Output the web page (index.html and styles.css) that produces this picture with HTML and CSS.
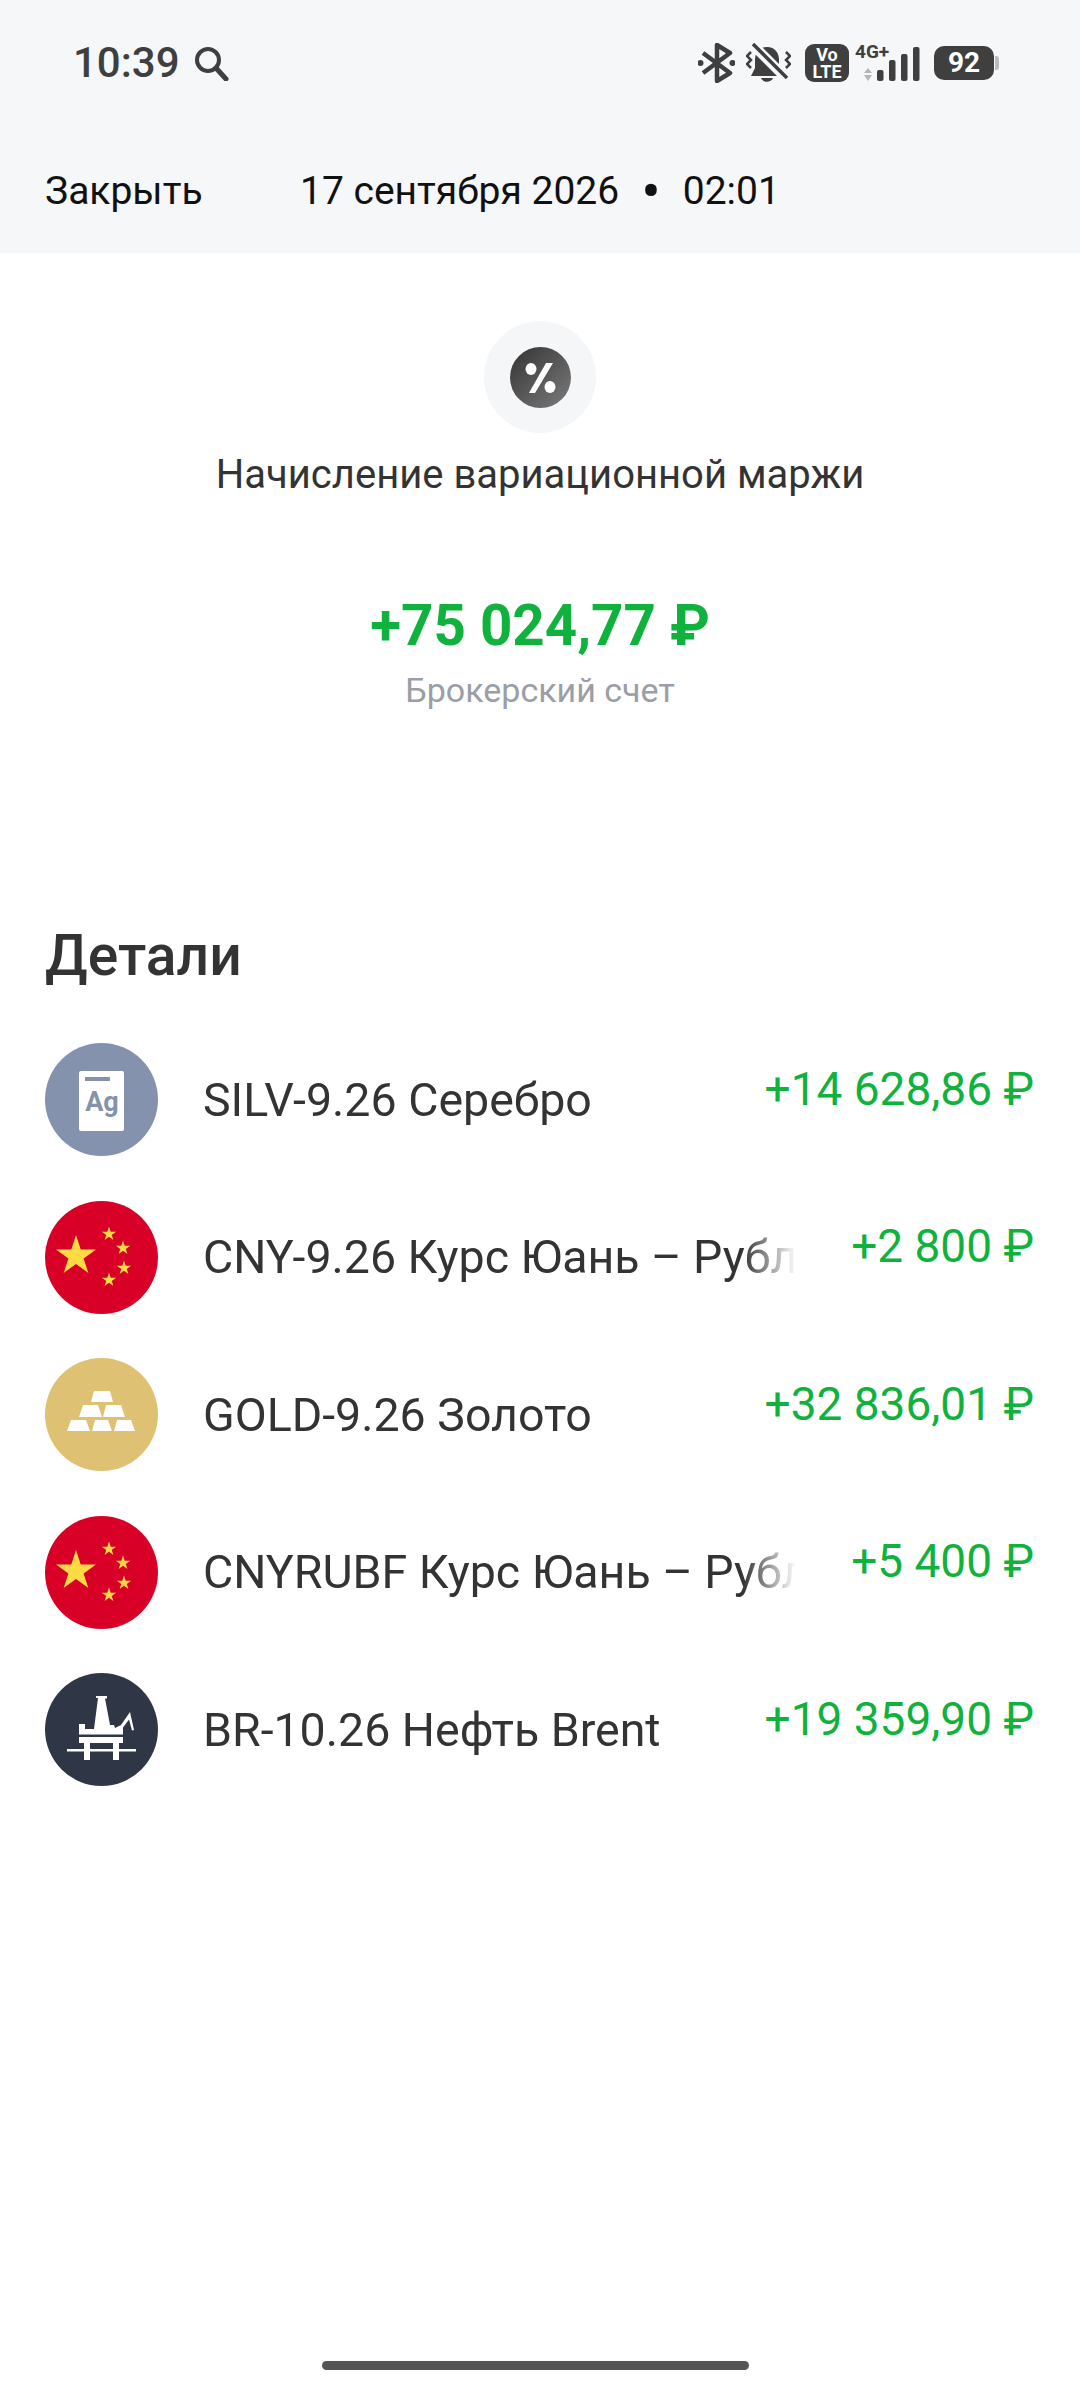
FILE: index.html
```html
<!DOCTYPE html>
<html lang="ru">
<head>
    <meta charset="UTF-8">
    <meta name="viewport" content="width=device-width, initial-scale=1.0">
    <title>Начисление вариационной маржи</title>
    <link rel="stylesheet" href="styles.css">
</head>
<body>

<svg class="defs" width="0" height="0">
    <defs>
        <polygon id="star" points="0,-1 .225,-.309 .951,-.309 .363,.118 .588,.809 0,.382 -.588,.809 -.363,.118 -.951,-.309 -.225,-.309"/>
        <symbol id="flag" viewBox="0 0 113 113">
            <circle cx="56.5" cy="56.5" r="56.5" fill="#d80027"/>
            <g fill="#ffda44">
                <use href="#star" transform="translate(31 55) scale(21)"/>
                <use href="#star" transform="translate(64 33) scale(7.5)"/>
                <use href="#star" transform="translate(78 47) scale(7.5)"/>
                <use href="#star" transform="translate(79 67) scale(7.5)"/>
                <use href="#star" transform="translate(64 79) scale(7.5)"/>
            </g>
        </symbol>
    </defs>
</svg>

<header class="top">
    <div class="status">
        <div class="status-left">
            <span class="clock">10:39</span>
            <svg class="search" width="35" height="35" viewBox="0 0 35 35" fill="none" stroke="#3f3f3f" stroke-width="4">
                <circle cx="14" cy="14" r="11"/>
                <path d="M22 22l10 11" stroke-width="5" stroke-linecap="round"/>
            </svg>
        </div>
        <div class="status-right">
            <svg width="37" height="40" viewBox="0 0 37 40" fill="none" stroke="#3f3f3f" stroke-width="4.5" stroke-linejoin="round">
                <path d="M5 10l27 20-13 8V2l13 8L5 30"/>
                <circle cx="2.500" cy="20" r="3" fill="#3f3f3f" stroke="none"/>
                <circle cx="34.500" cy="20" r="3" fill="#3f3f3f" stroke="none"/>
            </svg>
            <svg class="bell" width="45" height="40" viewBox="0 0 45 40" fill="#3f3f3f">
                <path d="M21 4c8 0 12 6 12 13v8l4 8H5l4-8v-8C9 10 13 4 21 4z"/>
                <path d="M15 35h12c-2 5-10 5-12 0z"/>
                <path d="M5 0l36 36" stroke="#f6f7f9" stroke-width="10"/>
                <path d="M7 1l34 34" stroke="#3f3f3f" stroke-width="3.500"/>
                <path d="M5 9L1 13l4 4-4 4 4 4M40 9l4 4-4 4 4 4-4 4" fill="none" stroke="#3f3f3f" stroke-width="2.500"/>
            </svg>
            <div class="volte"><span>Vo</span><span>LTE</span></div>
            <svg class="net" width="65" height="40" viewBox="0 0 65 40">
                <text x="0" y="15" class="net-label">4G+</text>
                <path d="M9 30l4-5 4 5zM9 32h8l-4 6z" fill="#b5b5b5"/>
                <g fill="#3f3f3f">
                    <rect x="22" y="27" width="6.500" height="11" rx="2"/>
                    <rect x="34" y="17" width="6.500" height="21" rx="2"/>
                    <rect x="46" y="11" width="6.500" height="27" rx="2"/>
                    <rect x="58" y="4" width="6.500" height="34" rx="2"/>
                </g>
            </svg>
            <div class="battery"><span class="battery-level">92</span><span class="battery-cap"></span></div>
        </div>
    </div>
    <nav class="nav">
        <span class="close">Закрыть</span>
        <span class="date"><span>17 сентября 2026</span><span class="dot">•</span><span>02:01</span></span>
    </nav>
</header>

<main>
    <section class="summary">
        <div class="op-icon">
            <svg width="61" height="61" viewBox="0 0 61 61">
                <defs>
                    <linearGradient id="opGrad" x1="0" y1="0" x2="1" y2="1">
                        <stop offset="0" stop-color="#333"/>
                        <stop offset="1" stop-color="#7c7c7c"/>
                    </linearGradient>
                </defs>
                <circle cx="30.500" cy="30.500" r="30.500" fill="url(#opGrad)"/>
                <ellipse cx="21" cy="22" rx="5.500" ry="6" fill="#fff"/>
                <ellipse cx="40" cy="40" rx="5.500" ry="6" fill="#fff"/>
                <path d="M36 16h7L25 46h-6z" fill="#fff"/>
            </svg>
        </div>
        <div class="op-title">Начисление вариационной маржи</div>
        <div class="op-sum">+75 024,77 ₽</div>
        <div class="op-account">Брокерский счет</div>
    </section>

    <section class="details">
        <h2>Детали</h2>

        <div class="row">
            <svg class="logo" viewBox="0 0 113 113">
                <circle cx="56.500" cy="56.500" r="56.500" fill="#8592ad"/>
                <rect x="34" y="28" width="45" height="60" rx="2" fill="#fff"/>
                <rect x="40" y="34" width="25" height="4" fill="#8592ad"/>
                <text x="57" y="68" text-anchor="middle" class="ag">Ag</text>
            </svg>
            <div class="name">SILV-9.26 Серебро</div>
            <div class="amount">+14 628,86 ₽</div>
        </div>

        <div class="row">
            <svg class="logo"><use href="#flag"/></svg>
            <div class="name">CNY-9.26 Курс Юань – Рубль</div>
            <div class="amount">+2 800 ₽</div>
        </div>

        <div class="row">
            <svg class="logo" viewBox="0 0 113 113">
                <circle cx="56.500" cy="56.500" r="56.500" fill="#dfc173"/>
                <g fill="#fff">
                    <path d="M49 33h16l3 11H46z"/>
                    <path d="M38 47h15l4 12H34zM61 47h15l4 12H58z"/>
                    <path d="M26 62h15l4 11H22zM50 62h13l4 11H47zM72 62h14l4 11H69z"/>
                </g>
            </svg>
            <div class="name">GOLD-9.26 Золото</div>
            <div class="amount">+32 836,01 ₽</div>
        </div>

        <div class="row">
            <svg class="logo"><use href="#flag"/></svg>
            <div class="name">CNYRUBF Курс Юань – Рубль</div>
            <div class="amount">+5 400 ₽</div>
        </div>

        <div class="row">
            <svg class="logo" viewBox="0 0 113 113">
                <circle cx="56.500" cy="56.500" r="56.500" fill="#2f3747"/>
                <g fill="#fff">
                    <path d="M51 23h11v2.500h-2L65 52h4l1 3 6-3 9-13 4 18-2 .5-3-11-6 8v7H34V51h6v5h9l4-31h-2z"/>
                    <rect x="34" y="64" width="44" height="6"/>
                    <rect x="22" y="76" width="69" height="2.500"/>
                    <rect x="39" y="70" width="6" height="17"/>
                    <rect x="68" y="70" width="6" height="17"/>
                </g>
            </svg>
            <div class="name">BR-10.26 Нефть Brent</div>
            <div class="amount">+19 359,90 ₽</div>
        </div>
    </section>
</main>

<div class="home-bar"></div>

</body>
</html>
```

FILE: styles.css
```css
html, body {
    margin: 0;
    padding: 0;
}
body {
    width: 1080px;
    height: 2392px;
    overflow: hidden;
    background: #fff;
    font-family: Roboto, "Noto Sans", sans-serif;
    color: #333;
    position: relative;
}
.defs {
    position: absolute;
}
.top {
    background: #f6f7f9;
    height: 253px;
    color: #111;
}
.status {
    height: 125px;
    display: flex;
    justify-content: space-between;
    align-items: center;
    padding: 0 81px 0 73px;
}
.status-left {
    display: flex;
    align-items: center;
    gap: 14px;
}
.clock {
    font-size: 42px;
    font-weight: 500;
    color: #3f3f3f;
}
.search {
    margin-top: 2px;
}
.status-right {
    display: flex;
    align-items: center;
    gap: 11px;
}
.bell {
    margin-right: 3px;
}
.volte {
    width: 44px;
    height: 38px;
    background: #3f3f3f;
    border-radius: 9px;
    color: #fff;
    font-size: 18px;
    font-weight: 700;
    line-height: 17px;
    display: flex;
    flex-direction: column;
    align-items: center;
    justify-content: center;
}
.net {
    margin-left: -5px;
}
.net-label {
    font-size: 19px;
    font-weight: 700;
    fill: #3f3f3f;
}
.battery {
    display: flex;
    align-items: center;
    gap: 1px;
    margin-left: 3px;
}
.battery-level {
    width: 60px;
    height: 34px;
    background: #3f3f3f;
    border-radius: 10px;
    color: #fff;
    font-size: 28px;
    font-weight: 700;
    line-height: 34px;
    text-align: center;
}
.battery-cap {
    width: 4px;
    height: 14px;
    background: #bbb;
    border-radius: 0 3px 3px 0;
}
.nav {
    display: flex;
    align-items: center;
    height: 128px;
    padding: 4px 45px 0;
    font-size: 39px;
    box-sizing: border-box;
}
.close {
    width: 255px;
}
.date {
    display: flex;
    align-items: center;
    gap: 22px;
}
.dot {
    font-size: 58px;
    line-height: 40px;
}
.summary {
    display: flex;
    flex-direction: column;
    align-items: center;
}
.op-icon {
    width: 112px;
    height: 112px;
    margin-top: 68px;
    border-radius: 50%;
    background: #f5f6f8;
    display: flex;
    align-items: center;
    justify-content: center;
}
.op-title {
    margin-top: 18px;
    font-size: 40px;
    line-height: 48px;
}
.op-sum {
    margin-top: 93px;
    font-size: 56.5px;
    font-weight: 700;
    line-height: 68px;
    color: #0fb23c;
}
.op-account {
    margin-top: 10px;
    font-size: 34px;
    line-height: 40px;
    color: #9a9ea6;
}
.details {
    padding: 0 46px 0 45px;
}
.details h2 {
    margin: 214px 0 33px;
    font-size: 57px;
    line-height: 64px;
    font-weight: 500;
}
.row {
    display: grid;
    grid-template-columns: 113px 45px 593px 1fr;
    align-items: center;
    height: 157.5px;
}
.logo {
    width: 113px;
    height: 113px;
    grid-column: 1;
    grid-row: 1;
}
.ag {
    font-size: 27px;
    font-weight: 700;
    fill: #8592ad;
}
.name {
    grid-column: 3;
    grid-row: 1;
    font-size: 46.5px;
    white-space: nowrap;
    overflow: hidden;
    -webkit-mask-image: linear-gradient(to right, #000 91%, transparent 100%);
    mask-image: linear-gradient(to right, #000 91%, transparent 100%);
}
.amount {
    grid-column: 3 / 5;
    grid-row: 1;
    justify-self: end;
    margin-top: -22px;
    font-size: 46px;
    white-space: nowrap;
    color: #0fb23c;
    background: #fff;
}
.home-bar {
    position: absolute;
    left: 322px;
    top: 2361px;
    width: 427px;
    height: 9px;
    border-radius: 5px;
    background: #555;
}
```
